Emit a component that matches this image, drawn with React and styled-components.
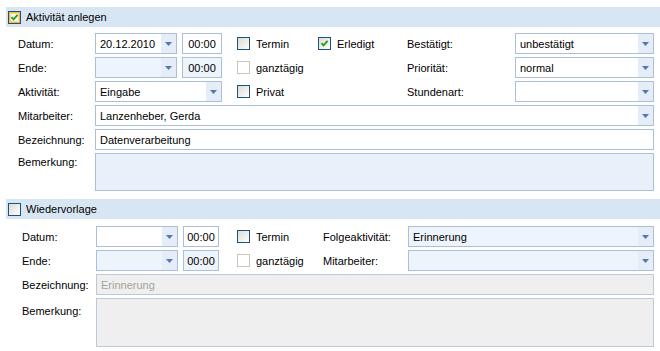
import styled, { createGlobalStyle, css } from "styled-components";

const GlobalStyle = createGlobalStyle`
  body {
    margin: 0;
    background: #ffffff;
    font-family: "Liberation Sans", Arial, sans-serif;
    font-size: 11px;
    color: #000000;
  }
`;

const Page = styled.div`
  width: 660px;
  height: 351px;
  padding: 7px 0 0 6px;
  box-sizing: border-box;
  overflow: hidden;
`;

const SectionHeader = styled.div`
  height: 20px;
  background-color: #d8e6f3;
  display: flex;
  align-items: center;
  gap: 5px;
  padding-left: 2px;
  margin-top: ${(p) => (p.$first ? "0" : "8px")};
`;

const HeaderTitle = styled.span`
  font-size: 11px;
  color: #000;
`;

const FormGrid = styled.div`
  display: grid;
  grid-template-columns: ${(p) => p.$cols};
  grid-template-rows: ${(p) => p.$rows};
  row-gap: 3px;
  align-items: center;
  padding-left: ${(p) => p.$indent}px;
  padding-right: 6px;
  margin-top: ${(p) => p.$top}px;
`;

const Label = styled.span`
  grid-column: ${(p) => p.$col || "auto"};
  align-self: ${(p) => (p.$top !== undefined ? "start" : "center")};
  padding-top: ${(p) => p.$top || 0}px;
  white-space: nowrap;
`;

const fieldBg = {
  white: "#ffffff",
  light: "#eef4fc",
  memo: "#e9f0fa",
  disabled: "#efefef",
};

const Field = styled.div`
  grid-column: ${(p) => p.$col || "auto"};
  width: ${(p) => (p.$width ? `${p.$width}px` : "auto")};
  height: ${(p) => p.$height || 21}px;
  box-sizing: border-box;
  border: 1px solid ${(p) => (p.$bg === "disabled" ? "#bcc9da" : "#abbfda")};
  background-color: ${(p) => fieldBg[p.$bg || "white"]};
  display: flex;
  align-items: stretch;
  align-self: ${(p) => (p.$height ? "start" : "center")};
`;

const Value = styled.span`
  flex: 1;
  display: flex;
  align-items: center;
  padding-left: ${(p) => (p.$center ? "0" : "4px")};
  justify-content: ${(p) => (p.$center ? "center" : "flex-start")};
  color: ${(p) => (p.$muted ? "#a3a39a" : "#000")};
  white-space: nowrap;
  overflow: hidden;
`;

const DropButton = styled.span`
  width: 15px;
  background-color: #e4edf8;
  display: flex;
  align-items: center;
  justify-content: center;
`;

const Arrow = () => (
  <svg width="7" height="4" viewBox="0 0 7 4">
    <polygon points="0,0 7,0 3.5,4" fill="#5577b0" />
  </svg>
);

const Combo = ({ col, width, bg, children }) => (
  <Field $col={col} $width={width} $bg={bg}>
    <Value>{children}</Value>
    <DropButton>
      <Arrow />
    </DropButton>
  </Field>
);

const TimeBox = ({ width, bg }) => (
  <Field $width={width} $bg={bg}>
    <Value $center>00:00</Value>
  </Field>
);

const boxStates = {
  normal: css`
    border: 1px solid #1c5180;
    background: linear-gradient(135deg, #dcdcd5 0%, #f4f4f1 70%, #ffffff 100%);
  `,
  disabled: css`
    border: 1px solid #cac8bb;
    background: #ffffff;
  `,
  hover: css`
    border: 1px solid #1c5180;
    background: linear-gradient(135deg, #f0f0ec 0%, #ffffff 100%);
    box-shadow: inset 0 0 0 1px #f5b73e, inset 0 0 0 2px #fcd889;
  `,
};

const Box = styled.span`
  width: 13px;
  height: 13px;
  box-sizing: border-box;
  display: inline-flex;
  align-items: center;
  justify-content: center;
  flex-shrink: 0;
  ${(p) => boxStates[p.$state || "normal"]}
`;

const CheckBox = ({ state, checked }) => (
  <Box $state={state}>
    {checked && (
      <svg width="9" height="9" viewBox="0 0 9 9">
        <path d="M1.5 4.2 L3.5 6.3 L7.6 1.8" stroke="#21a121" strokeWidth="1.9" fill="none" />
      </svg>
    )}
  </Box>
);

const CheckField = styled.label`
  grid-column: ${(p) => p.$col || "auto"};
  display: flex;
  align-items: center;
  gap: 6px;
  white-space: nowrap;
`;

const Check = ({ col, state, checked, children }) => (
  <CheckField $col={col}>
    <CheckBox state={state} checked={checked} />
    <span>{children}</span>
  </CheckField>
);

export default function App() {
  return (
    <Page>
      <GlobalStyle />
      <SectionHeader $first>
        <CheckBox state="hover" checked />
        <HeaderTitle>Aktivität anlegen</HeaderTitle>
      </SectionHeader>
      <FormGrid
        $top={6}
        $indent={12}
        $cols="77px 87px 55px 81px 89px 108px 1fr"
        $rows="repeat(5, 21px) 38px"
      >
        <Label>Datum:</Label>
        <Combo width={82}>20.12.2010</Combo>
        <TimeBox width={40} />
        <Check>Termin</Check>
        <Check checked>Erledigt</Check>
        <Label>Bestätigt:</Label>
        <Combo>unbestätigt</Combo>

        <Label>Ende:</Label>
        <Combo width={82} bg="light" />
        <TimeBox width={40} bg="light" />
        <Check state="disabled">ganztägig</Check>
        <Label $col="6">Priorität:</Label>
        <Combo>normal</Combo>

        <Label>Aktivität:</Label>
        <Combo col="2 / 4" width={127}>Eingabe</Combo>
        <Check>Privat</Check>
        <Label $col="6">Stundenart:</Label>
        <Combo />

        <Label>Mitarbeiter:</Label>
        <Combo col="2 / -1">Lanzenheber, Gerda</Combo>

        <Label>Bezeichnung:</Label>
        <Field $col="2 / -1">
          <Value>Datenverarbeitung</Value>
        </Field>

        <Label $top={3}>Bemerkung:</Label>
        <Field $col="2 / -1" $bg="memo" $height={38} />
      </FormGrid>

      <SectionHeader>
        <CheckBox />
        <HeaderTitle>Wiedervorlage</HeaderTitle>
      </SectionHeader>
      <FormGrid
        $top={7}
        $indent={16}
        $cols="74px 87px 54px 86px 85px 1fr"
        $rows="repeat(3, 21px) 49px"
      >
        <Label>Datum:</Label>
        <Combo width={82} />
        <TimeBox width={36} />
        <Check>Termin</Check>
        <Label>Folgeaktivität:</Label>
        <Combo bg="light">Erinnerung</Combo>

        <Label>Ende:</Label>
        <Combo width={82} bg="light" />
        <TimeBox width={36} bg="light" />
        <Check state="disabled">ganztägig</Check>
        <Label>Mitarbeiter:</Label>
        <Combo bg="light" />

        <Label>Bezeichnung:</Label>
        <Field $col="2 / -1" $bg="disabled">
          <Value $muted>Erinnerung</Value>
        </Field>

        <Label $top={7}>Bemerkung:</Label>
        <Field $col="2 / -1" $bg="disabled" $height={49} />
      </FormGrid>
    </Page>
  );
}
